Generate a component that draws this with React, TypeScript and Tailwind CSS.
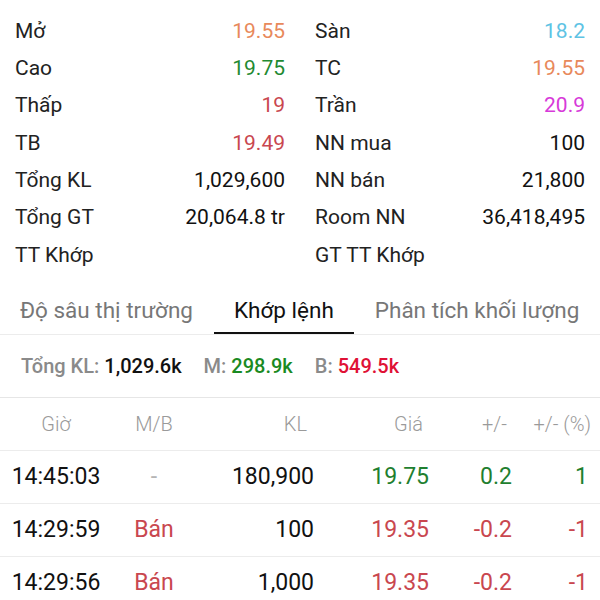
import React from 'react'

const font = { fontFamily: 'Roboto, "Noto Sans", sans-serif' }

type Stat = { label: string; value: string; color: string }

const left: Stat[] = [
  { label: 'Mở', value: '19.55', color: 'text-[#e8895b]' },
  { label: 'Cao', value: '19.75', color: 'text-[#1f8a32]' },
  { label: 'Thấp', value: '19', color: 'text-[#c9474f]' },
  { label: 'TB', value: '19.49', color: 'text-[#c9474f]' },
  { label: 'Tổng KL', value: '1,029,600', color: 'text-[#111111]' },
  { label: 'Tổng GT', value: '20,064.8 tr', color: 'text-[#111111]' },
  { label: 'TT Khớp', value: '', color: '' },
]

const right: Stat[] = [
  { label: 'Sàn', value: '18.2', color: 'text-[#5ec3e4]' },
  { label: 'TC', value: '19.55', color: 'text-[#e8895b]' },
  { label: 'Trần', value: '20.9', color: 'text-[#d73ad9]' },
  { label: 'NN mua', value: '100', color: 'text-[#111111]' },
  { label: 'NN bán', value: '21,800', color: 'text-[#111111]' },
  { label: 'Room NN', value: '36,418,495', color: 'text-[#111111]' },
  { label: 'GT TT Khớp', value: '', color: '' },
]

type Trade = { time: string; side: string; vol: string; price: string; chg: string; pct: string; up: boolean }

const trades: Trade[] = [
  { time: '14:45:03', side: '-', vol: '180,900', price: '19.75', chg: '0.2', pct: '1', up: true },
  { time: '14:29:59', side: 'Bán', vol: '100', price: '19.35', chg: '-0.2', pct: '-1', up: false },
  { time: '14:29:56', side: 'Bán', vol: '1,000', price: '19.35', chg: '-0.2', pct: '-1', up: false },
]

function StatColumn({ items }: { items: Stat[] }) {
  return (
    <div className="flex flex-col px-[15px]">
      {items.map((s) => (
        <div key={s.label} className="flex h-[37.33px] items-center justify-between text-[21px] leading-[26px]">
          <span className="text-[#222222]">{s.label}</span>
          <span className={s.color}>{s.value}</span>
        </div>
      ))}
    </div>
  )
}

const cols = 'grid grid-cols-[112px_84px_118px_115px_83px_1fr]'
const tab = 'shrink-0 whitespace-nowrap border-b-2 pt-[24px] pb-[9px]'

export default function App() {
  return (
    <div style={font} className="h-[600px] w-[600px] overflow-hidden bg-white">
      <div className="grid grid-cols-2 pt-[12px]">
        <StatColumn items={left} />
        <StatColumn items={right} />
      </div>

      <div className="flex overflow-hidden border-b border-[#ececec] text-[22.5px] leading-[26px]">
        <button className={`${tab} border-transparent pl-5 pr-[21px] text-[#777777]`}>Độ sâu thị trường</button>
        <button className={`${tab} border-[#111111] px-[20px] text-[#111111]`}>Khớp lệnh</button>
        <button className={`${tab} border-transparent px-[21px] text-[#777777]`}>Phân tích khối lượng</button>
      </div>

      <div className="flex h-[63px] items-center gap-[22px] border-b border-[#e6e6e6] pl-[21px] text-[20px] font-medium">
        <span>
          <span className="text-[#8a8a8a]">Tổng KL: </span>
          <span className="text-[#111111]">1,029.6k</span>
        </span>
        <span>
          <span className="text-[#8a8a8a]">M: </span>
          <span className="text-[#1a8a22]">298.9k</span>
        </span>
        <span>
          <span className="text-[#8a8a8a]">B: </span>
          <span className="text-[#df1135]">549.5k</span>
        </span>
      </div>

      <div className={`${cols} h-[53px] items-center border-b border-[#ececec] text-[20px] font-light text-[#9a9a9a]`}>
        <span className="text-center">Giờ</span>
        <span className="text-center">M/B</span>
        <span className="pr-[7px] text-right">KL</span>
        <span className="pr-[6px] text-right">Giá</span>
        <span className="pr-[5px] text-right">+/-</span>
        <span className="pr-[9px] text-right">+/- (%)</span>
      </div>

      {trades.map((t) => {
        const c = t.up ? 'text-[#1f7f30]' : 'text-[#c9474f]'
        return (
          <div key={t.time} className={`${cols} h-[53px] items-center border-b border-[#ececec] text-[23px]`}>
            <span className="text-center text-[#111111]">{t.time}</span>
            <span className={`text-center ${t.side === '-' ? 'text-[#b5b5b5]' : 'text-[#c9474f]'}`}>{t.side}</span>
            <span className="text-right text-[#111111]">{t.vol}</span>
            <span className={`text-right ${c}`}>{t.price}</span>
            <span className={`text-right ${c}`}>{t.chg}</span>
            <span className={`pr-[12px] text-right ${c}`}>{t.pct}</span>
          </div>
        )
      })}
    </div>
  )
}
